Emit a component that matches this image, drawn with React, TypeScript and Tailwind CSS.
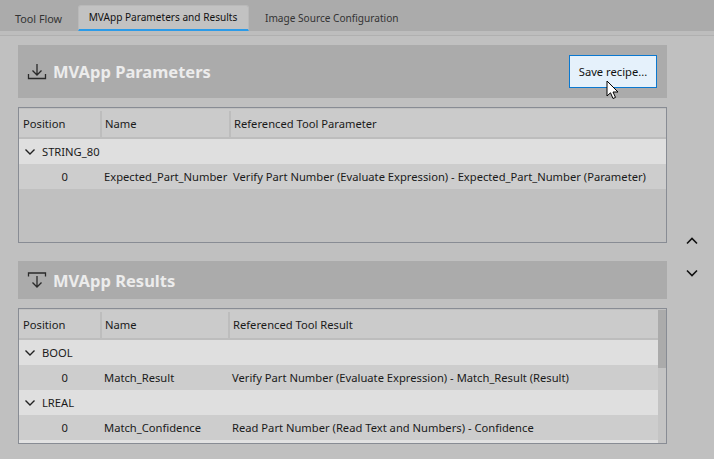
const font = { fontFamily: '"Noto Sans", "Open Sans", sans-serif' };

function Chevron({ up = false }: { up?: boolean }) {
  return (
    <svg width="12" height="8" viewBox="0 0 12 8" fill="none" stroke="currentColor" strokeWidth="1.6">
      <path d={up ? "M1 6.5 L6 1.5 L11 6.5" : "M1 1.5 L6 6.5 L11 1.5"} />
    </svg>
  );
}

function Group({ label }: { label: string }) {
  return (
    <div className="flex h-[25px] shrink-0 items-center bg-[#dfdfdf] text-[#1a1a1a]">
      <svg width="10" height="6" viewBox="0 0 10 6" fill="none" stroke="#222" strokeWidth="1.4" className="ml-[6px]">
        <path d="M0.5 0.5 L5 5 L9.5 0.5" />
      </svg>
      <span className="ml-[7px] pt-[2px]">{label}</span>
    </div>
  );
}

function Row({ name, ref2, c }: { name: string; ref2: string; c: string }) {
  return (
    <div className="flex h-[25px] shrink-0 items-center bg-[#cdcdcd] pt-[2px] text-[#1a1a1a]">
      <span className="w-[49px] shrink-0 text-right">0</span>
      <span className={`${c} shrink-0 overflow-hidden whitespace-nowrap pl-[36px]`}>{name}</span>
      <span className="whitespace-nowrap">{ref2}</span>
    </div>
  );
}

function Header({ third, c }: { third: string; c: string }) {
  return (
    <div className="flex h-[30px] shrink-0 border-b-2 border-[#bdbdbd] bg-[#cbcbcb] pt-[2px] text-[#1a1a1a]">
      <div className="flex w-[83px] shrink-0 items-center border-r-2 border-[#bdbdbd] pl-[4px]">Position</div>
      <div className={`flex ${c} shrink-0 items-center border-r-2 border-[#bdbdbd] pl-[3px]`}>Name</div>
      <div className="flex items-center pl-[3px]">{third}</div>
    </div>
  );
}

export default function App() {
  return (
    <div className="flex h-[459px] w-[714px] flex-col overflow-hidden bg-[#c0c0c0] text-[11.2px]" style={font}>
      <div className="flex h-[31px] shrink-0 items-end bg-[#ababab] pl-[15px] text-[10.1px] text-[#333]">
        <div className="flex h-[26px] w-[63px] items-center pt-[2px] text-[10.8px]">Tool Flow</div>
        <div className="flex h-[26px] w-[171px] items-center justify-center rounded-t-[3px] border-x border-t border-[#b9b9b9] border-b-2 border-b-[#2b9be8] bg-[#c2c2c2] pt-[1px] pr-[1px] text-[#111]">
          MVApp Parameters and Results
        </div>
        <div className="flex h-[26px] items-center pl-[16px] pt-[2px]">Image Source Configuration</div>
      </div>
      <div className="h-[5px] shrink-0 border-b border-[#b0b0b0] bg-[#bdbdbd]" />
      <div className="flex flex-1">
        <div className="flex w-[667px] shrink-0 flex-col pl-[18px] pt-[9px]">
          <div className="flex h-[53px] shrink-0 items-center justify-between bg-[#ababab] pl-[9px] pr-[10px]">
            <div className="flex items-center">
              <svg width="20" height="18" viewBox="0 0 20 18" fill="none" stroke="#2a2a2a" strokeWidth="1.3">
                <path d="M10 1 V11.5 M5.5 7.5 L10 12 L14.5 7.5" />
                <path d="M1.5 11 V15.5 H18.5 V11" />
              </svg>
              <span className="ml-[6px] pt-[2px] text-[16.5px] font-bold text-[#ececec]">MVApp Parameters</span>
            </div>
            <div className="flex h-[33px] w-[88px] items-center justify-center border border-[#0a78d0] bg-[#e5f1fb] pt-[2px] text-[#111]">
              Save recipe...
            </div>
          </div>
          <div className="mt-[9px] flex h-[136px] shrink-0 flex-col border border-[#888c94] pt-[1px]">
            <Header third="Referenced Tool Parameter" c="w-[129px]" />
            <Group label="STRING_80" />
            <Row name="Expected_Part_Number" ref2="Verify Part Number (Evaluate Expression) - Expected_Part_Number (Parameter)" c="w-[165px]" />
          </div>
          <div className="mt-[18px] flex h-[38px] shrink-0 items-center bg-[#ababab] pl-[9px]">
            <svg width="20" height="18" viewBox="0 0 20 18" fill="none" stroke="#2a2a2a" strokeWidth="1.3">
              <path d="M1.5 5.5 V2 H18.5 V5.5" />
              <path d="M10 5 V16 M5.5 11.5 L10 16 L14.5 11.5" />
            </svg>
            <span className="ml-[6px] pt-[2px] text-[16.5px] font-bold text-[#ececec]">MVApp Results</span>
          </div>
          <div className="mt-[9px] flex h-[136px] shrink-0 border border-[#888c94] pt-[1px]">
            <div className="flex min-w-0 flex-1 flex-col overflow-hidden bg-[#e2e2e2]">
              <Header third="Referenced Tool Result" c="w-[128px]" />
              <Group label="BOOL" />
              <Row name="Match_Result" ref2="Verify Part Number (Evaluate Expression) - Match_Result (Result)" c="w-[164px]" />
              <Group label="LREAL" />
              <Row name="Match_Confidence" ref2="Read Part Number (Read Text and Numbers) - Confidence" c="w-[164px]" />
            </div>
            <div className="w-[8px] shrink-0 bg-[#c4c4c4]">
              <div className="h-[58px] bg-[#ababab]" />
            </div>
          </div>
        </div>
        <div className="flex flex-1 flex-col items-center gap-[24px] pt-[201px] pl-[3px] text-[#111]">
          <Chevron up />
          <Chevron />
        </div>
      </div>
      <svg width="14" height="20" viewBox="0 0 14 20" className="absolute left-[606px] top-[80px]">
        <path d="M1 1 V16 L4.5 12.8 L7 18.5 L9.5 17.4 L7 12 H12 Z" fill="#fff" stroke="#000" strokeWidth="1" />
      </svg>
    </div>
  );
}
